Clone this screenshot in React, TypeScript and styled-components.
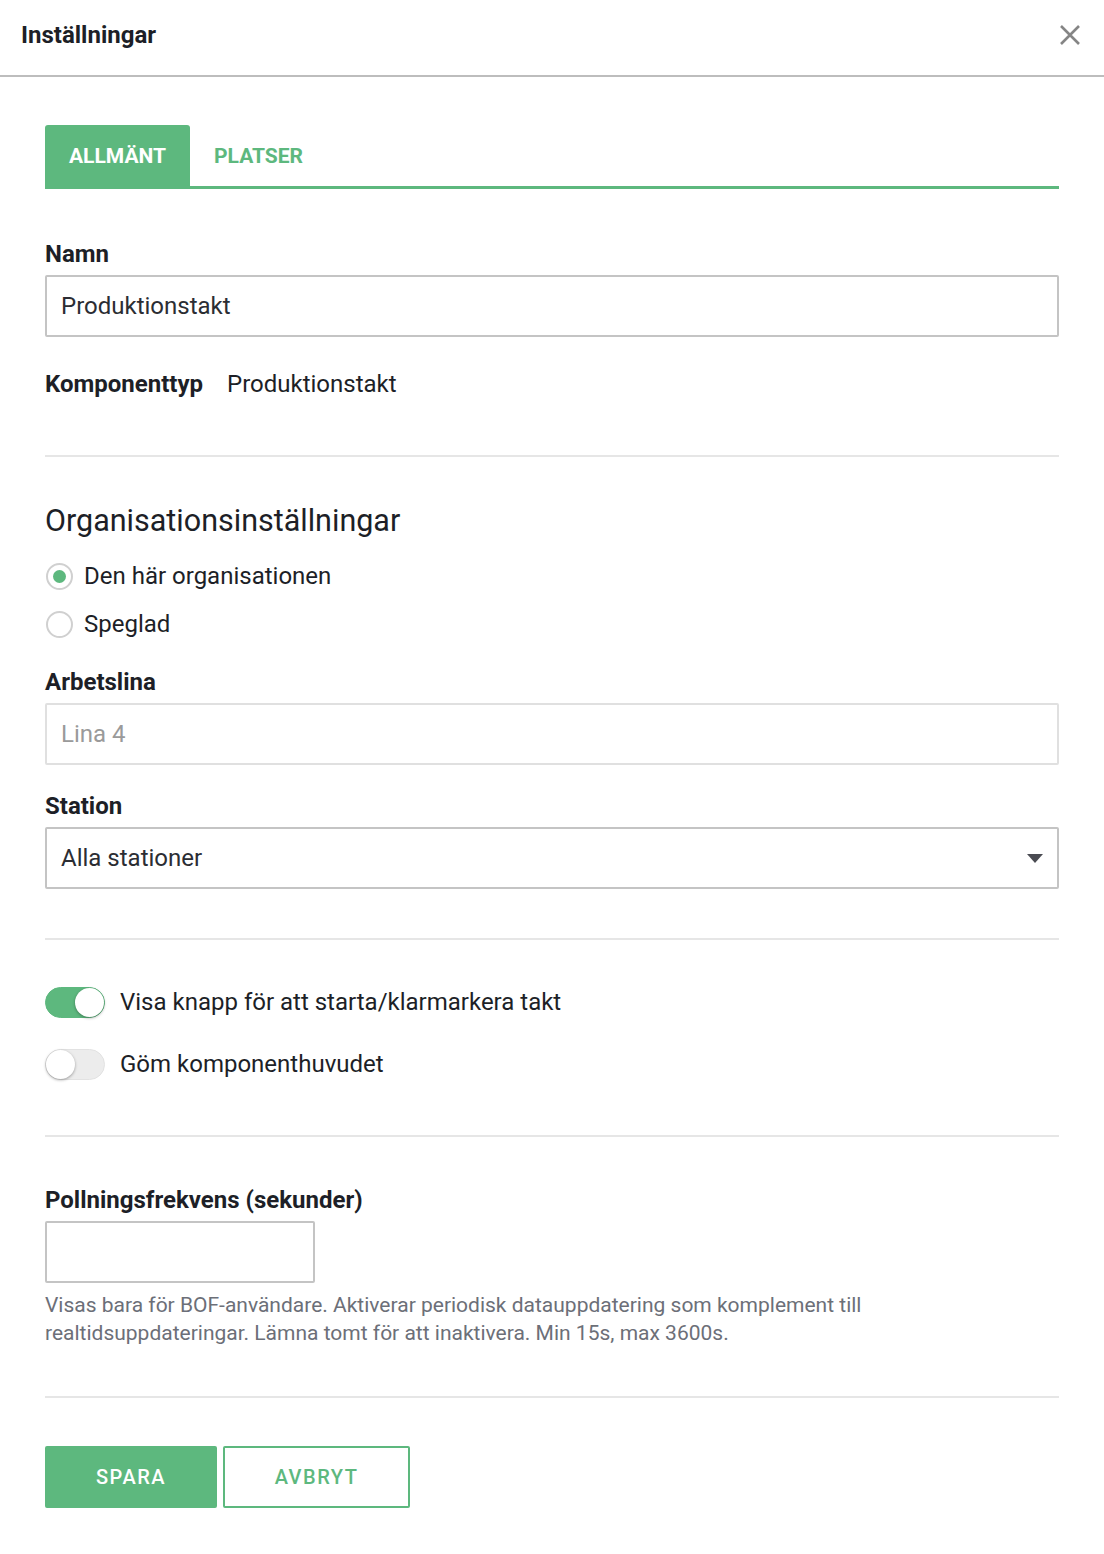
import React, { useState } from 'react';
import styled, { createGlobalStyle } from 'styled-components';

const GREEN = '#5db87e';
const TEXT = '#1d1f27';

const GlobalStyle = createGlobalStyle`
  html, body {
    margin: 0;
    padding: 0;
    background: #fff;
    font-family: Roboto, 'Liberation Sans', sans-serif;
    color: ${TEXT};
  }
  * { box-sizing: border-box; }
`;

const Page = styled.div`
  width: 1104px;
  min-height: 1554px;
  background: #fff;
`;

const Header = styled.header`
  height: 77px;
  display: flex;
  align-items: center;
  justify-content: space-between;
  padding: 0 22px 6px 21px;
  border-bottom: 2px solid #bdbdbd;
  h1 {
    margin: 0;
    font-size: 24px;
    font-weight: 700;
  }
`;

const CloseButton = styled.button`
  border: none;
  background: none;
  padding: 0;
  width: 24px;
  height: 24px;
  display: flex;
  align-items: center;
  justify-content: center;
  cursor: pointer;
`;

const Body = styled.div`
  padding: 48px 45px 40px 45px;
  display: flex;
  flex-direction: column;
`;

const Tabs = styled.div`
  display: flex;
  border-bottom: 3px solid ${GREEN};
`;

const Tab = styled.button<{ $active?: boolean }>`
  height: 61px;
  padding: 0 24px;
  border: none;
  border-radius: 3px 3px 0 0;
  background: ${(p) => (p.$active ? GREEN : 'transparent')};
  color: ${(p) => (p.$active ? '#fff' : GREEN)};
  font-family: inherit;
  font-size: 21px;
  font-weight: 700;
  cursor: pointer;
`;

const Label = styled.div<{ $top: number }>`
  margin-top: ${(p) => p.$top}px;
  font-size: 24px;
  font-weight: 700;
  line-height: 24px;
`;

const Field = styled.div<{ $disabled?: boolean }>`
  margin-top: 9px;
  height: 62px;
  border: 2px solid ${(p) => (p.$disabled ? '#e0e0e0' : '#c4c4c4')};
  border-radius: 2px;
  display: flex;
  align-items: center;
  justify-content: space-between;
  padding: 0 14px 0 14px;
  font-size: 24px;
  color: ${(p) => (p.$disabled ? '#9a9a9a' : '#2b2d33')};
`;

const SmallField = styled(Field)`
  width: 270px;
`;

const InfoRow = styled.div`
  margin-top: 32px;
  display: flex;
  align-items: center;
  height: 30px;
  font-size: 24px;
  gap: 24px;
  b { font-weight: 700; }
`;

const Divider = styled.hr<{ $top: number }>`
  margin: ${(p) => p.$top}px 0 0 0;
  border: none;
  border-top: 2px solid #e6e6e6;
`;

const SectionTitle = styled.h2`
  margin: 46px 0 0 0;
  font-size: 30.5px;
  font-weight: 400;
  line-height: 36px;
`;

const RadioGroup = styled.div`
  margin-top: 19px;
  display: flex;
  flex-direction: column;
  gap: 12px;
`;

const RadioRow = styled.label`
  display: flex;
  align-items: center;
  height: 36px;
  gap: 11px;
  font-size: 24px;
  cursor: pointer;
`;

const RadioDot = styled.span<{ $checked?: boolean }>`
  width: 27px;
  height: 27px;
  border-radius: 50%;
  border: 2px solid #d0d0d0;
  margin-left: 1px;
  display: flex;
  align-items: center;
  justify-content: center;
  &::after {
    content: '';
    width: 13px;
    height: 13px;
    border-radius: 50%;
    background: ${(p) => (p.$checked ? GREEN : 'transparent')};
  }
`;

const ToggleGroup = styled.div`
  margin-top: 46px;
  display: flex;
  flex-direction: column;
  gap: 30px;
`;

const ToggleRow = styled.label`
  display: flex;
  align-items: center;
  height: 32px;
  gap: 15px;
  font-size: 24px;
  cursor: pointer;
`;

const Switch = styled.span<{ $on?: boolean }>`
  position: relative;
  width: 60px;
  height: 31px;
  border-radius: 16px;
  background: ${(p) => (p.$on ? GREEN : '#ececec')};
  border: 1px solid ${(p) => (p.$on ? GREEN : '#e2e2e2')};
  flex-shrink: 0;
  &::after {
    content: '';
    position: absolute;
    top: 0px;
    left: ${(p) => (p.$on ? '29px' : '0px')};
    width: 29px;
    height: 29px;
    border-radius: 50%;
    background: #fff;
    box-shadow: 0 1px 3px rgba(0, 0, 0, 0.35);
  }
`;

const Help = styled.p`
  margin: 8px 0 0 0;
  font-size: 21px;
  line-height: 28px;
  color: #6c6f78;
  max-width: 880px;
`;

const Actions = styled.div`
  margin-top: 48px;
  display: flex;
  gap: 6px;
`;

const ActionButton = styled.button<{ $primary?: boolean }>`
  height: 62px;
  width: ${(p) => (p.$primary ? '172px' : '187px')};
  border-radius: 2px;
  border: 2px solid ${GREEN};
  background: ${(p) => (p.$primary ? GREEN : '#fff')};
  color: ${(p) => (p.$primary ? '#fff' : GREEN)};
  font-family: inherit;
  font-size: 20px;
  font-weight: 500;
  letter-spacing: 1.5px;
  cursor: pointer;
`;

const App = () => {
  const [tab, setTab] = useState('general');
  const [org, setOrg] = useState('this');
  const [showButton, setShowButton] = useState(true);
  const [hideHeader, setHideHeader] = useState(false);

  return (
    <Page>
      <GlobalStyle />
      <Header>
        <h1>Inställningar</h1>
        <CloseButton aria-label='Stäng'>
          <svg width='22' height='22' viewBox='0 0 22 22'>
            <path d='M2 2 L20 20 M20 2 L2 20' stroke='#858585' strokeWidth='2.6' />
          </svg>
        </CloseButton>
      </Header>
      <Body>
        <Tabs>
          <Tab $active={tab === 'general'} onClick={() => setTab('general')}>
            ALLMÄNT
          </Tab>
          <Tab $active={tab === 'places'} onClick={() => setTab('places')}>
            PLATSER
          </Tab>
        </Tabs>

        <Label $top={53}>Namn</Label>
        <Field>Produktionstakt</Field>

        <InfoRow>
          <b>Komponenttyp</b>
          <span>Produktionstakt</span>
        </InfoRow>

        <Divider $top={56} />

        <SectionTitle>Organisationsinställningar</SectionTitle>
        <RadioGroup>
          <RadioRow onClick={() => setOrg('this')}>
            <RadioDot $checked={org === 'this'} />
            Den här organisationen
          </RadioRow>
          <RadioRow onClick={() => setOrg('mirror')}>
            <RadioDot $checked={org === 'mirror'} />
            Speglad
          </RadioRow>
        </RadioGroup>

        <Label $top={28}>Arbetslina</Label>
        <Field $disabled>Lina 4</Field>

        <Label $top={29}>Station</Label>
        <Field>
          Alla stationer
          <svg width='16' height='9' viewBox='0 0 16 9'>
            <path d='M0 0 H16 L8 9 Z' fill='#4a4b52' />
          </svg>
        </Field>

        <Divider $top={49} />

        <ToggleGroup>
          <ToggleRow onClick={() => setShowButton(!showButton)}>
            <Switch $on={showButton} />
            Visa knapp för att starta/klarmarkera takt
          </ToggleRow>
          <ToggleRow onClick={() => setHideHeader(!hideHeader)}>
            <Switch $on={hideHeader} />
            Göm komponenthuvudet
          </ToggleRow>
        </ToggleGroup>

        <Divider $top={55} />

        <Label $top={51}>Pollningsfrekvens (sekunder)</Label>
        <SmallField />
        <Help>
          Visas bara för BOF-användare. Aktiverar periodisk datauppdatering som komplement till
          realtidsuppdateringar. Lämna tomt för att inaktivera. Min 15s, max 3600s.
        </Help>

        <Divider $top={49} />

        <Actions>
          <ActionButton $primary>SPARA</ActionButton>
          <ActionButton>AVBRYT</ActionButton>
        </Actions>
      </Body>
    </Page>
  );
};

export default App;
